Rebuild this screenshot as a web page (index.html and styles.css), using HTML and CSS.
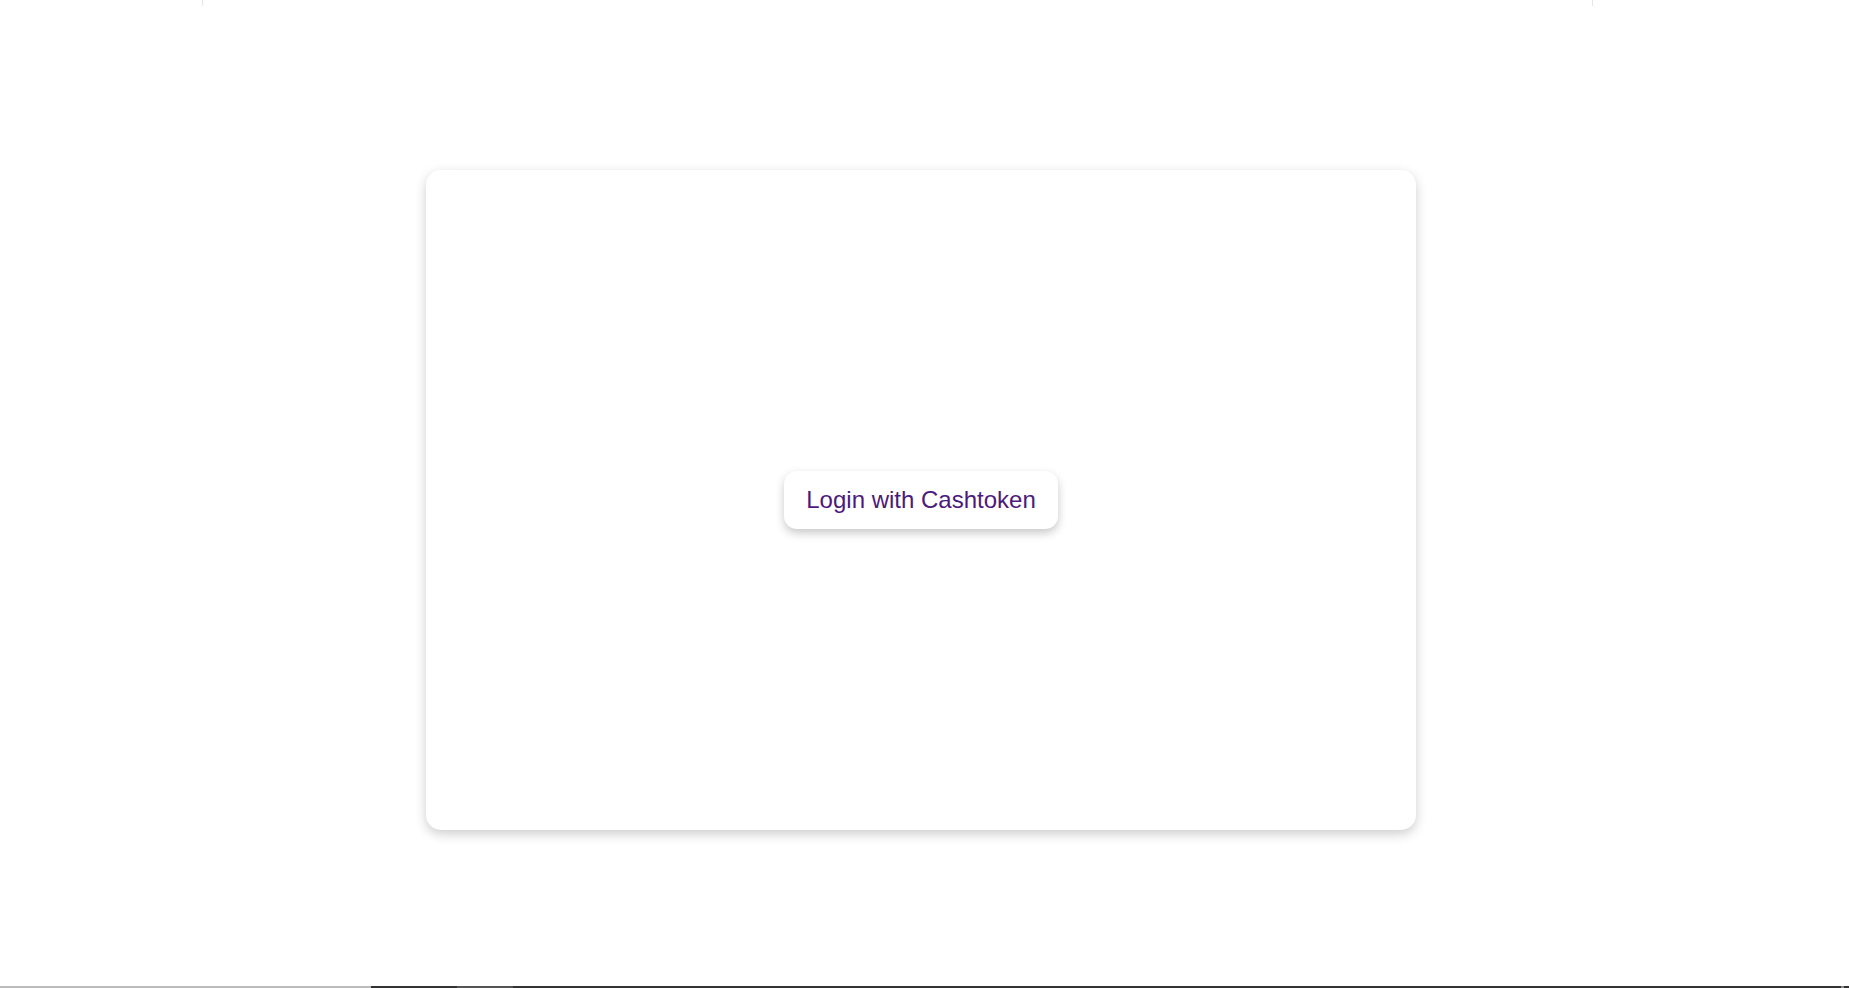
FILE: index.html
```html
<!DOCTYPE html>
<html lang="en">
<head>
<meta charset="utf-8">
<title>Login</title>
<link rel="stylesheet" href="styles.css">
</head>
<body>
<div class="page">
  <div class="topframe"></div>
  <main class="main">
    <section class="card">
      <button class="login-btn" type="button">Login with Cashtoken</button>
    </section>
  </main>
  <div class="bottombar">
    <span class="seg seg-light"></span>
    <span class="seg seg-dark1"></span>
    <span class="seg seg-mid"></span>
    <span class="seg seg-dark2"></span>
    <span class="seg seg-mark"></span>
    <span class="seg seg-end"></span>
  </div>
</div>
</body>
</html>
```
FILE: styles.css
```css
html, body {
  margin: 0;
  padding: 0;
  background: #ffffff;
  font-family: "Liberation Sans", Arial, sans-serif;
}
.page {
  height: 988px;
  display: flex;
  flex-direction: column;
  overflow: hidden;
}
.topframe {
  height: 6px;
  margin: 0 256px 0 202px;
  border-left: 1px solid #e6e6e6;
  border-right: 1px solid #e6e6e6;
}
.main {
  flex: 1;
  display: flex;
  justify-content: center;
  align-items: flex-start;
  padding-top: 164px;
  padding-right: 7px;
}
.card {
  width: 990px;
  height: 660px;
  background: #ffffff;
  border-radius: 15px;
  box-shadow: 0 4px 12px rgba(0, 0, 0, 0.2);
  display: flex;
  align-items: center;
  justify-content: center;
}
.login-btn {
  height: 58px;
  padding: 0 22px;
  border: none;
  border-radius: 13px;
  background: #ffffff;
  color: #4b1a80;
  font-family: "Liberation Sans", Arial, sans-serif;
  font-size: 24px;
  box-shadow: 0 4px 10px rgba(0, 0, 0, 0.22);
  cursor: pointer;
}
.bottombar {
  height: 2px;
  display: flex;
}
.seg { display: block; height: 2px; }
.seg-light { width: 371px; background: #bbbbbb; }
.seg-dark1 { width: 86px; background: #333333; }
.seg-mid { width: 56px; background: #555555; }
.seg-dark2 { flex: 1; background: #333333; }
.seg-mark { width: 3px; background: #888888; }
.seg-end { width: 5px; background: #333333; }
```
